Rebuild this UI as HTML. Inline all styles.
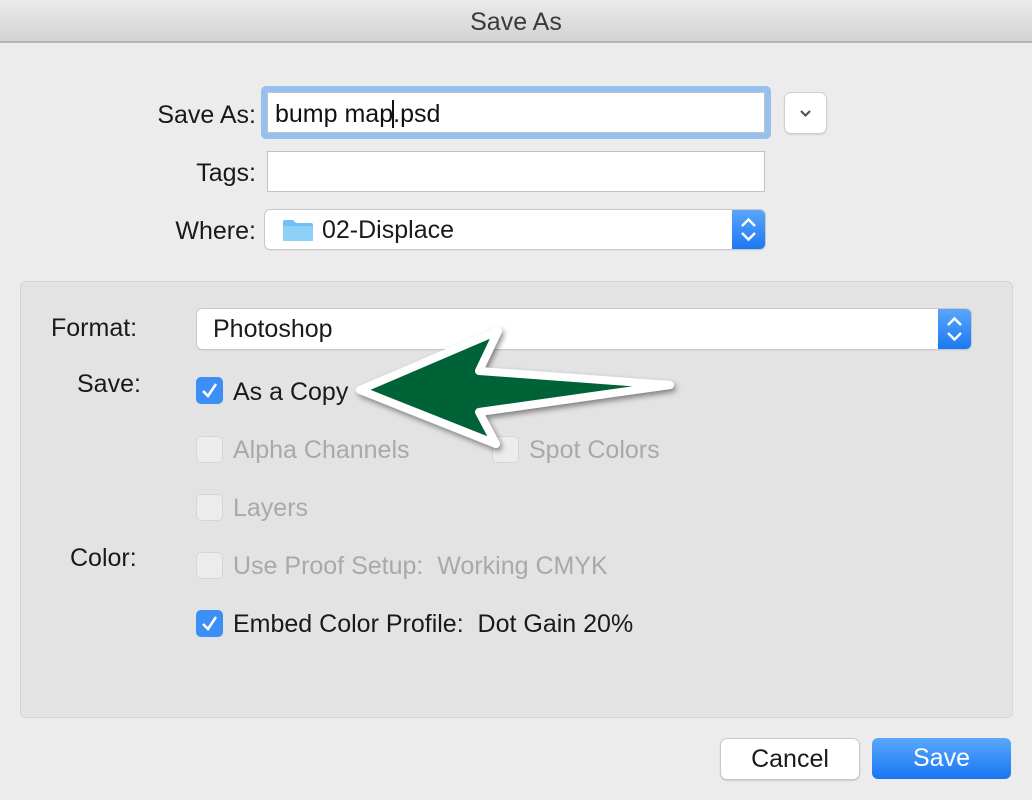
<!DOCTYPE html>
<html><head><style>
*{box-sizing:border-box;margin:0;padding:0}
body{width:1032px;height:800px;background:#ececec;font-family:"Liberation Sans",sans-serif;position:relative;overflow:hidden;color:#1a1a1a}
.a{position:absolute}
.title{left:0;top:0;width:1032px;height:43px;background:linear-gradient(#ebebeb,#d3d3d3);border-bottom:2px solid #b4b4b4;text-align:center;font-size:25px;line-height:44px;color:#3a3a3a}
.lbl{font-size:25px;line-height:30px}
.field{background:#fff;border:1px solid #c2c2c2}
.pop{background:#fff;border-radius:5px;box-shadow:0 0 0 1px #c8c8c8,0 1px 1px #aaa;font-size:25px;line-height:40px;padding-left:16px}
.step{position:absolute;right:0;top:0;bottom:0;width:33px;background:linear-gradient(#5aa6fb,#1c78f2);border-radius:0 5px 5px 0}
.cb{width:27px;height:27px;border-radius:5px}
.on{background:#3b8ff5}
.off{background:#ececec;box-shadow:inset 0 0 0 1px #d5d5d5}
.dim{color:#a9a9a9}
</style></head><body>
<div class="a title">Save As</div>

<div class="a lbl" style="right:776px;top:100px">Save As:</div>
<div class="a" style="left:261px;top:86px;width:510px;height:53px;background:#96c0f0;border-radius:5px"></div>
<div class="a field" style="left:267px;top:92px;width:498px;height:41px;font-size:25px;line-height:42px;padding-left:7px;color:#111">bump map<span style="border-left:2px solid #111;margin:0 -1px"></span>.psd</div>
<div class="a" style="left:785px;top:93px;width:41px;height:40px;background:#fff;border-radius:6px;box-shadow:0 0 0 1px #cfcfcf,0 1px 2px #aaa"><svg width="41" height="40"><path d="M16 18l4.5 4.5 4.5-4.5" fill="none" stroke="#555" stroke-width="2.2"/></svg></div>

<div class="a lbl" style="right:776px;top:158px">Tags:</div>
<div class="a field" style="left:267px;top:151px;width:498px;height:41px"></div>

<div class="a lbl" style="right:776px;top:216px">Where:</div>
<div class="a pop" style="left:265px;top:210px;width:500px;height:39px;padding-left:57px">02-Displace
<svg class="a" style="left:17px;top:8px" width="32" height="24"><path d="M1 4a2 2 0 0 1 2-2h8l3 3h15a2 2 0 0 1 2 2v15a1 1 0 0 1-1 1H2a1 1 0 0 1-1-1z" fill="#6fc0f3"/><path d="M1 8h30v14a1 1 0 0 1-1 1H2a1 1 0 0 1-1-1z" fill="#8fd0f8"/></svg>
<div class="step"><svg width="33" height="39"><path d="M10 16l6.5-6.5 6.5 6.5M10 23l6.5 6.5 6.5-6.5" fill="none" stroke="#fff" stroke-width="2.4"/></svg></div></div>

<div class="a" style="left:20px;top:281px;width:993px;height:437px;background:#e3e3e3;border:1px solid #d5d5d5;border-radius:6px"></div>

<div class="a lbl" style="left:51px;top:313px">Format:</div>
<div class="a pop" style="left:197px;top:309px;width:774px;height:40px">Photoshop<div class="step"><svg width="33" height="40"><path d="M10 16l6.5-6.5 6.5 6.5M10 24l6.5 6.5 6.5-6.5" fill="none" stroke="#fff" stroke-width="2.4"/></svg></div></div>

<div class="a lbl" style="left:77px;top:369px">Save:</div>
<div class="a cb on" style="left:196px;top:377px"><svg width="27" height="27"><path d="M7 14l5 5 8-12" fill="none" stroke="#fff" stroke-width="2.6"/></svg></div>
<div class="a lbl" style="left:233px;top:377px">As a Copy</div>

<div class="a cb off" style="left:196px;top:436px"></div>
<div class="a lbl dim" style="left:233px;top:435px">Alpha Channels</div>
<div class="a cb off" style="left:492px;top:436px"></div>
<div class="a lbl dim" style="left:529px;top:435px">Spot Colors</div>

<div class="a cb off" style="left:196px;top:494px"></div>
<div class="a lbl dim" style="left:233px;top:493px">Layers</div>

<div class="a lbl" style="left:70px;top:543px">Color:</div>
<div class="a cb off" style="left:196px;top:552px"></div>
<div class="a lbl dim" style="left:233px;top:551px">Use Proof Setup:&nbsp; Working CMYK</div>

<div class="a cb on" style="left:196px;top:610px"><svg width="27" height="27"><path d="M7 14l5 5 8-12" fill="none" stroke="#fff" stroke-width="2.6"/></svg></div>
<div class="a lbl" style="left:233px;top:609px">Embed Color Profile:&nbsp; Dot Gain 20%</div>

<svg class="a" style="left:0;top:0" width="1032" height="800"><defs><filter id="s" x="-20%" y="-20%" width="140%" height="140%"><feDropShadow dx="2" dy="3" stdDeviation="3" flood-opacity=".45"/></filter></defs>
<path d="M360 390L498 331L479 371L670 385L479 412L496 444Z" fill="#006437" stroke="#fff" stroke-width="8" stroke-linejoin="round" filter="url(#s)"/></svg>

<div class="a" style="left:721px;top:739px;width:138px;height:40px;background:#fff;border-radius:6px;box-shadow:0 0 0 1px #c8c8c8,0 1px 2px #999;text-align:center;font-size:25px;line-height:40px">Cancel</div>
<div class="a" style="left:872px;top:738px;width:139px;height:41px;background:linear-gradient(#5aa8fc,#1876f3);border-radius:6px;text-align:center;font-size:25px;line-height:41px;color:#fff">Save</div>
</body></html>
